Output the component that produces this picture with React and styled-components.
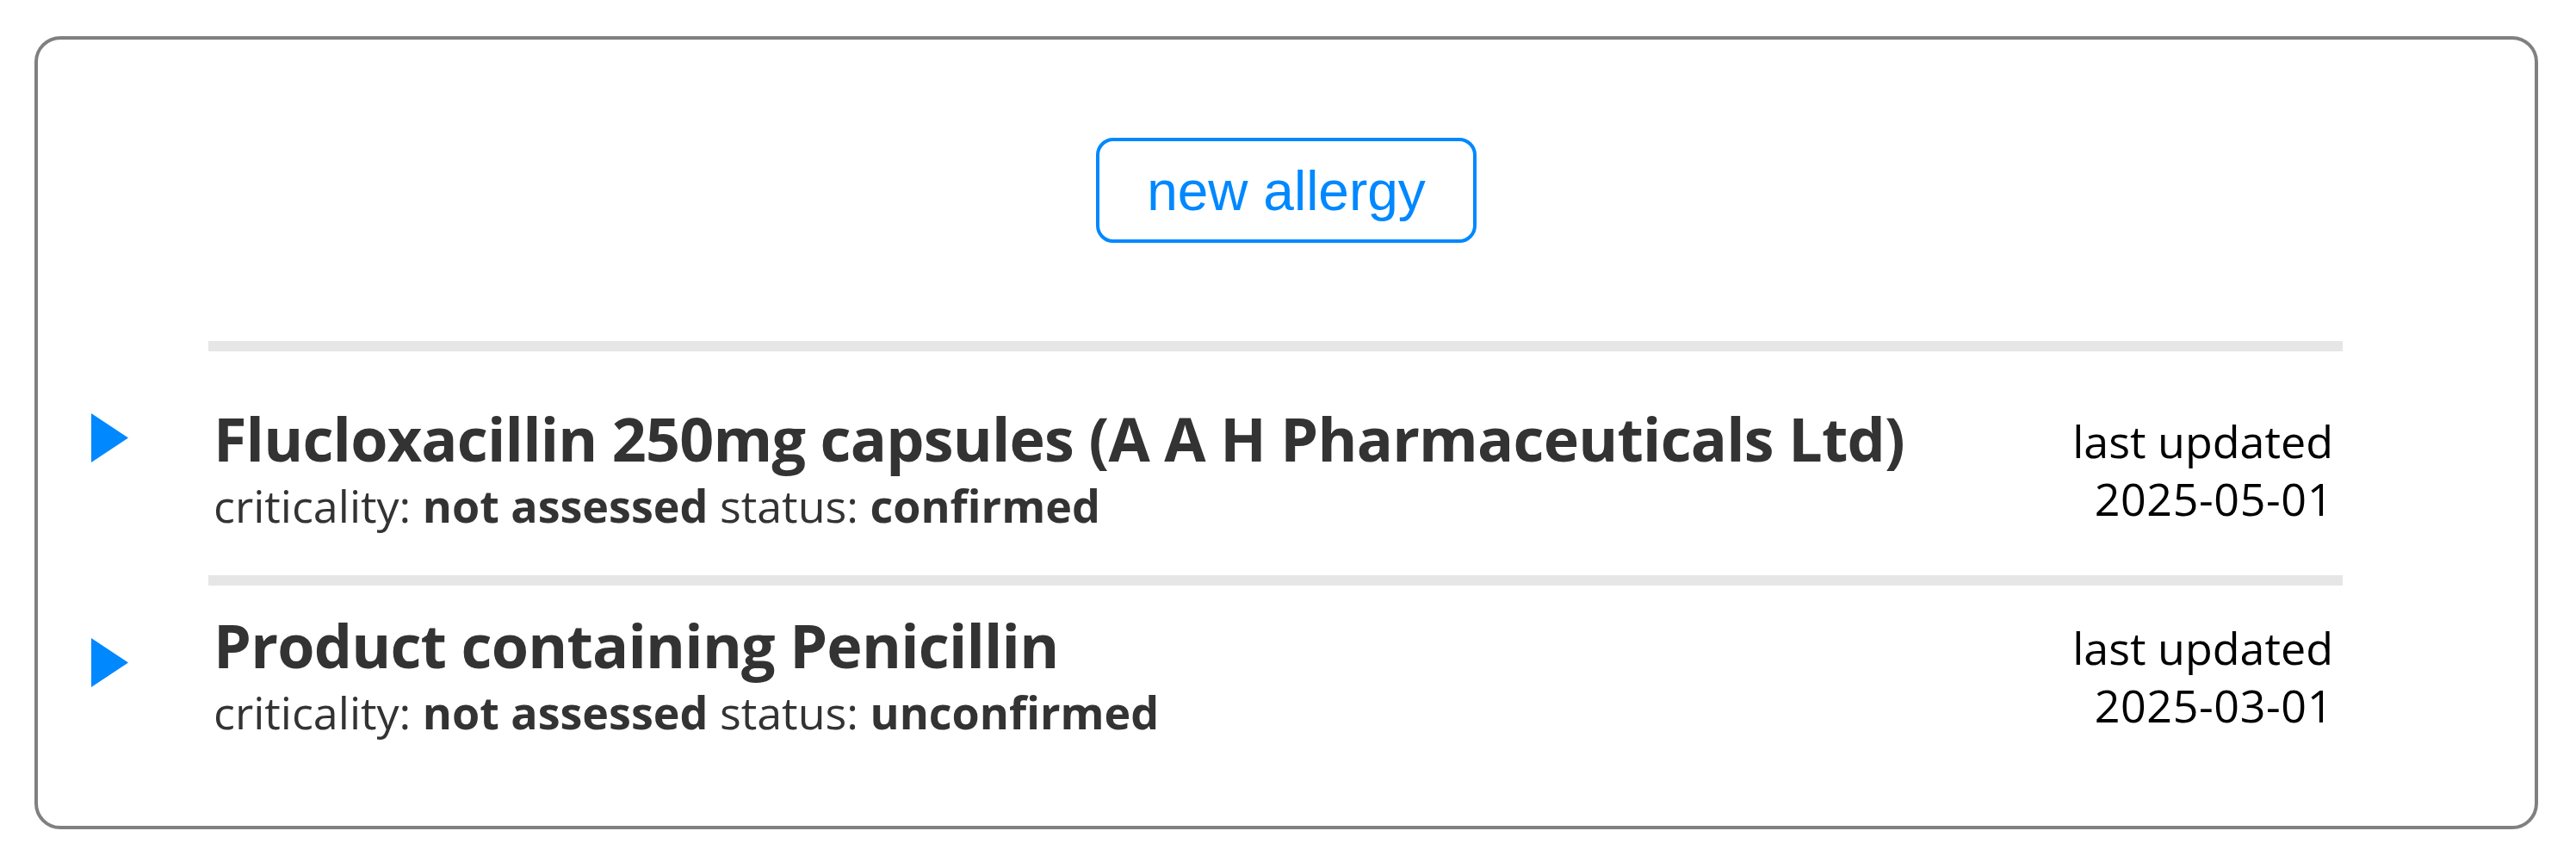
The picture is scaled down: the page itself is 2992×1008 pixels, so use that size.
import React from 'react';
import styled, { createGlobalStyle } from 'styled-components';

const GlobalStyle = createGlobalStyle`
  html, body {
    margin: 0;
    padding: 0;
    background: #ffffff;
  }
  body {
    font-family: "Open Sans", "Noto Sans", sans-serif;
  }
`;

const Card = styled.section`
  margin: 42px 44px 45px 40px;
  border: 4px solid #808080;
  border-radius: 30px;
  padding: 114px 0 51px;
  background: #ffffff;
`;

const Toolbar = styled.div`
  display: flex;
  justify-content: center;
  margin-bottom: 114px;
`;

const NewButton = styled.button`
  font-family: "Liberation Sans", Arial, sans-serif;
  font-size: 64px;
  line-height: 74px;
  color: #0088ff;
  background: #ffffff;
  border: 4px solid #0088ff;
  border-radius: 20px;
  padding: 21px 55px 19px;
  cursor: pointer;
`;

const List = styled.div`
  display: flex;
  flex-direction: column;
`;

const Divider = styled.div`
  height: 12px;
  background: #e6e6e6;
  margin: 0 223px 0 198px;
`;

const Row = styled.div`
  display: grid;
  grid-template-columns: 204px 1fr auto;
  align-items: center;
  padding: ${(p) => p.$padTop}px 234px 45px 0;
  color: #333333;
`;

const Marker = styled.svg`
  align-self: start;
  margin-left: 62px;
  margin-top: ${(p) => p.$offset}px;
  width: 43px;
  height: 57px;
  display: block;
`;

const Info = styled.div`
  display: flex;
  flex-direction: column;
`;

const Title = styled.div`
  font-size: 70px;
  line-height: 84px;
  font-weight: 700;
  letter-spacing: -0.8px;
  white-space: nowrap;
`;

const Meta = styled.div`
  font-size: 52px;
  line-height: 72px;
  white-space: nowrap;

  b {
    font-weight: 700;
  }
`;

const Updated = styled.div`
  font-size: 52px;
  line-height: 67px;
  text-align: right;
  color: #000000;
  white-space: nowrap;
`;

const Date = styled.span`
  letter-spacing: 0.6px;
`;

const allergies = [
  {
    id: 'fluclox',
    name: 'Flucloxacillin 250mg capsules (A A H Pharmaceuticals Ltd)',
    criticality: 'not assessed',
    status: 'confirmed',
    updated: '2025-05-01',
    padTop: 59,
    marker: 13,
  },
  {
    id: 'penicillin',
    name: 'Product containing Penicillin',
    criticality: 'not assessed',
    status: 'unconfirmed',
    updated: '2025-03-01',
    padTop: 27,
    marker: 34,
  },
];

const App = () => (
  <>
    <GlobalStyle />
    <Card>
      <Toolbar>
        <NewButton type="button">new allergy</NewButton>
      </Toolbar>
      <List>
        {allergies.map((item) => (
          <React.Fragment key={item.id}>
            <Divider />
            <Row $padTop={item.padTop}>
              <Marker $offset={item.marker} viewBox="0 0 43 57">
                <polygon points="0,0 43,28.5 0,57" fill="#0088ff" />
              </Marker>
              <Info>
                <Title>{item.name}</Title>
                <Meta>
                  criticality: <b>{item.criticality}</b> status: <b>{item.status}</b>
                </Meta>
              </Info>
              <Updated>
                last updated
                <br />
                <Date>{item.updated}</Date>
              </Updated>
            </Row>
          </React.Fragment>
        ))}
      </List>
    </Card>
  </>
);

export default App;
